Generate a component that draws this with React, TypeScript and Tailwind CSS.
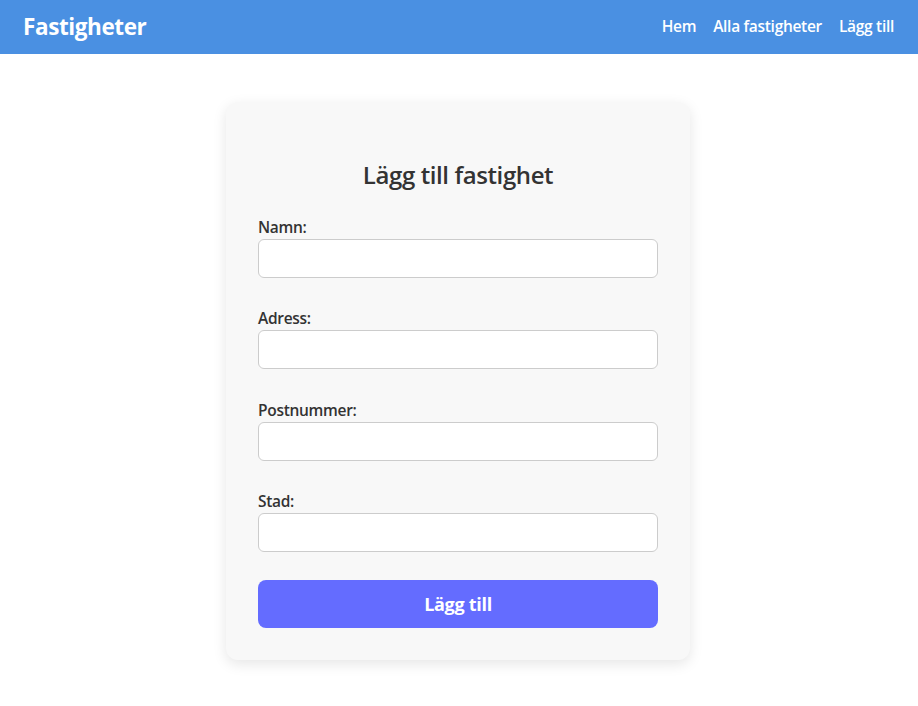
import React from "react";

const fields = ["Namn:", "Adress:", "Postnummer:", "Stad:"];

export default function App() {
  return (
    <div className="min-h-[706px] bg-white" style={{ fontFamily: '"Open Sans", "Noto Sans", sans-serif' }}>
      <header className="h-[54px] bg-[#4a90e2] flex items-center justify-between pl-[23px] pr-6 text-white">
        <div className="text-[22.5px] font-bold tracking-[-0.4px]">Fastigheter</div>
        <nav className="flex gap-[17px] text-[15.5px] font-semibold tracking-[-0.3px]">
          <a>Hem</a>
          <a>Alla fastigheter</a>
          <a>Lägg till</a>
        </nav>
      </header>
      <main className="flex justify-center pt-12">
        <div className="w-[464px] mr-[2px] bg-[#f8f8f8] rounded-xl shadow-[0_4px_14px_rgba(0,0,0,0.1)] px-8 pt-8 pb-8">
          <h2 className="text-[24px] leading-8 font-semibold text-[#333] text-center mt-[25px] mb-6 tracking-[-0.4px]">
            Lägg till fastighet
          </h2>
          {fields.map((f) => (
            <div key={f} className="flex flex-col mb-[28.3px]">
              <label className="text-[15.5px] leading-6 font-semibold text-[#333] tracking-[-0.3px]">{f}</label>
              <input className="h-[39px] bg-white border border-[#ccc] rounded-md px-2" />
            </div>
          ))}
          <button className="w-full h-[48px] bg-[#646cff] rounded-lg text-white text-[18px] font-bold tracking-[-0.3px]">
            Lägg till
          </button>
        </div>
      </main>
    </div>
  );
}
